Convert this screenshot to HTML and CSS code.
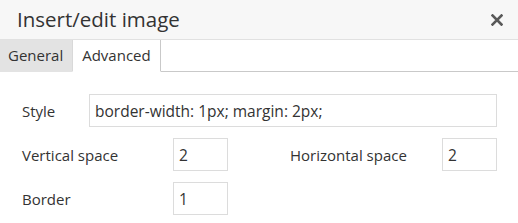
FILE: index.html
```html
<!DOCTYPE html>
<html lang="en">
<head>
  <meta charset="UTF-8" />
  <title>Insert/edit image</title>
  <link rel="stylesheet" href="styles.css">
</head>
<body>
  <div class="dialog">
    <div class="head">
      <span class="title">Insert/edit image</span>
      <button class="close" aria-label="Close">
        <svg width="12" height="12" viewBox="0 0 12 12">
          <path d="M1.5 1.5 L10.5 10.5 M10.5 1.5 L1.5 10.5" stroke="#595959" stroke-width="2.6" stroke-linecap="square" fill="none" />
        </svg>
      </button>
    </div>

    <div class="tabs">
      <div class="tab">General</div>
      <div class="tab active">Advanced</div>
      <div class="tab-fill"></div>
    </div>

    <div class="form">
      <div class="row">
        <label class="lbl lbl-style">Style</label>
        <input class="field wide" type="text" value="border-width: 1px; margin: 2px;" />
      </div>
      <div class="row">
        <label class="lbl lbl-long">Vertical space</label>
        <input class="field small" type="text" value="2" />
        <label class="lbl lbl-right">Horizontal space</label>
        <input class="field small" type="text" value="2" />
      </div>
      <div class="row">
        <label class="lbl lbl-long">Border</label>
        <input class="field small" type="text" value="1" />
      </div>
    </div>
  </div>
</body>
</html>
```

FILE: styles.css
```css
body {
  margin: 0;
  font-family: "Open Sans", sans-serif;
  color: #333;
  background-color: #fff;
}

.dialog {
  width: 518px;
  height: 223px;
  overflow: hidden;
}

.head {
  height: 39px;
  background-color: #f7f7f7;
  border-bottom: 1px solid #e1e1e1;
  display: flex;
  align-items: center;
  justify-content: space-between;
  padding: 0 15px 0 17px;
}

.title {
  font-size: 20.5px;
  line-height: 39px;
  color: #333;
}

.close {
  background: none;
  border: none;
  padding: 0;
  width: 12px;
  height: 12px;
  display: flex;
  cursor: pointer;
}

.tabs {
  display: flex;
  height: 32px;
}

.tab {
  font-size: 15px;
  line-height: 31px;
  padding: 0 9px 0 8px;
  background-color: #e3e3e3;
  color: #333;
  border-bottom: 1px solid #e3e3e3;
}

.tab.active {
  background-color: #fff;
  border-left: 1px solid #d9d9d9;
  border-right: 1px solid #c9c9c9;
  border-bottom-color: #fff;
  padding: 0 9px 0 9px;
}

.tab-fill {
  flex: 1;
  border-bottom: 1px solid #c9c9c9;
}

.form {
  padding: 22px 21px 0 22px;
  display: flex;
  flex-direction: column;
  gap: 11px;
}

.row {
  display: flex;
  align-items: center;
}

.lbl {
  font-size: 15px;
  color: #333;
}

.lbl-style {
  width: 67px;
}

.lbl-long {
  width: 151px;
}

.lbl-right {
  margin-left: 62px;
  width: 152px;
}

.field {
  box-sizing: border-box;
  height: 33px;
  border: 1px solid #dcdcdc;
  padding: 0 5px;
  font-family: "Open Sans", sans-serif;
  font-size: 15.5px;
  color: #333;
  outline: none;
}

.field.wide {
  flex: 1;
}

.field.small {
  width: 55px;
}
```
